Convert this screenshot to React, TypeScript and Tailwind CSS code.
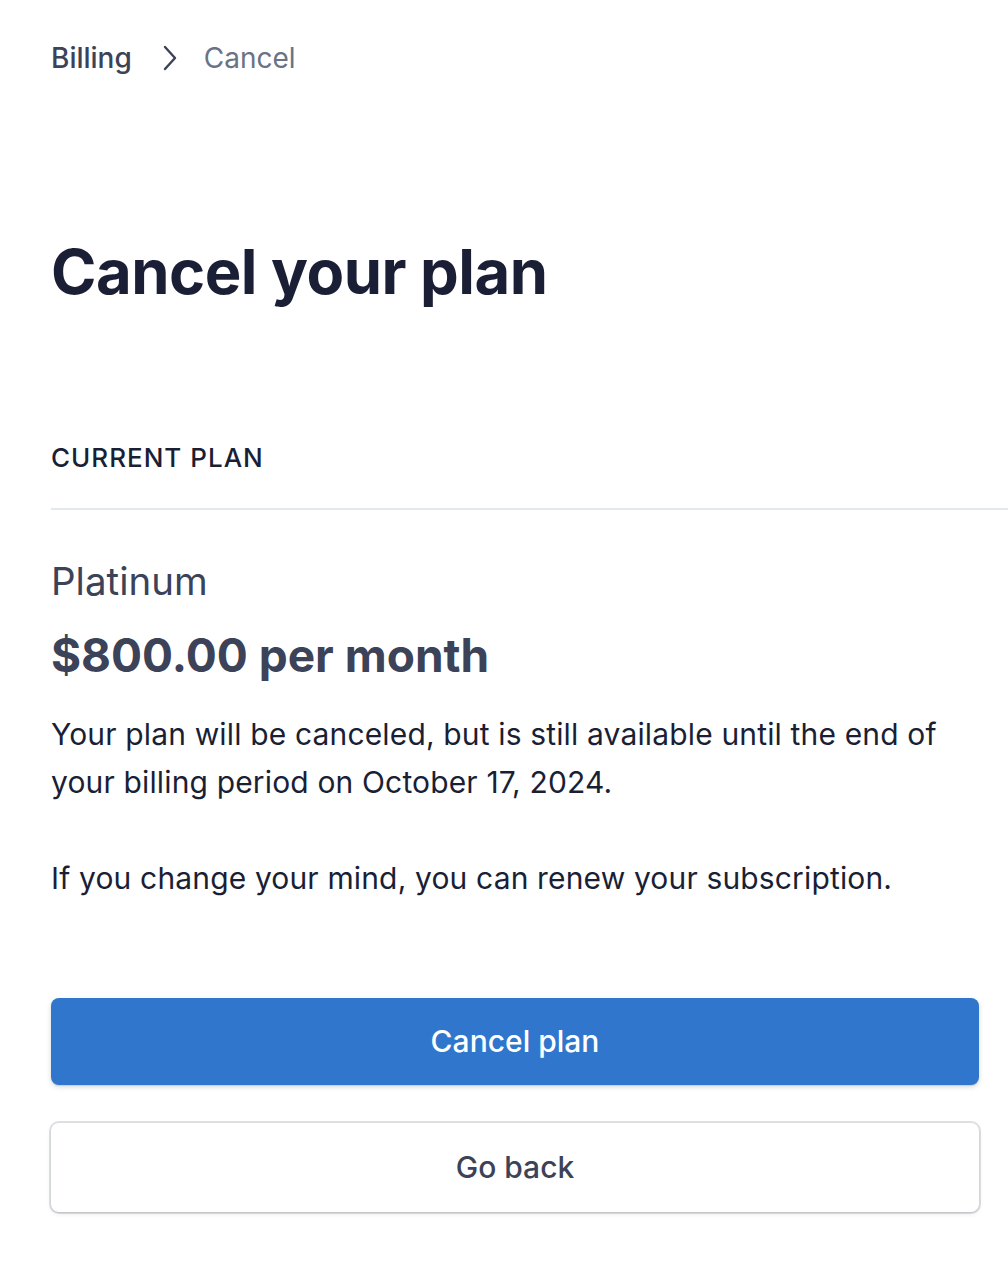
export default function App() {
  return (
    <div className="min-h-screen bg-white font-['Inter',sans-serif] text-[#1a1f36] overflow-hidden">
      <div className="pl-[51px] pr-[29px] pt-[40px]">
        <nav className="flex items-center text-[28px] leading-[36px]">
          <span className="font-medium text-[#3c4257]">Billing</span>
          <svg className="ml-[31px] mr-[27px] h-[26px] w-[14px] text-[#3c4257]" viewBox="0 0 14 26" fill="none">
            <path d="M2 2l10 11L2 24" stroke="currentColor" strokeWidth="2.4" strokeLinecap="round" strokeLinejoin="round" />
          </svg>
          <span className="text-[#697386]">Cancel</span>
        </nav>

        <h1 className="mt-[158px] text-[61.5px] font-bold leading-[76px] tracking-[-0.5px]">Cancel your plan</h1>

        <div className="mt-[132px] text-[26px] font-medium leading-[32px] tracking-[1px]">CURRENT PLAN</div>
        <div className="mt-[34px] -mr-[40px] h-[2px] bg-[#e3e8ee]" />

        <div className="mt-[49px] text-[38.5px] leading-[44px] text-[#3c4257]">Platinum</div>
        <div className="mt-[26px] text-[46px] font-bold leading-[52px] text-[#3c4257]">$800.00 per month</div>

        <p className="mt-[29px] text-[30px] leading-[48px] tracking-[0.15px]">
          Your plan will be canceled, but is still available until the end of your billing period on October 17, 2024.
        </p>
        <p className="mt-[48px] text-[30px] leading-[48px] tracking-[0.15px]">
          If you change your mind, you can renew your subscription.
        </p>

        <div className="mt-[96px] flex flex-col gap-[38px]">
          <button className="h-[87px] w-full rounded-[8px] bg-[#2f76cc] text-[30px] font-medium text-white shadow-[0_2px_5px_rgba(60,66,87,0.2),0_1px_1px_rgba(0,0,0,0.1)]">
            Cancel plan
          </button>
          <button className="h-[89px] w-full rounded-[8px] bg-white text-[30px] font-medium text-[#3c4257] shadow-[0_0_0_2px_rgba(60,66,87,0.16),0_2px_5px_rgba(60,66,87,0.1),0_1px_1px_rgba(0,0,0,0.08)]">
            Go back
          </button>
        </div>
      </div>
    </div>
  );
}
